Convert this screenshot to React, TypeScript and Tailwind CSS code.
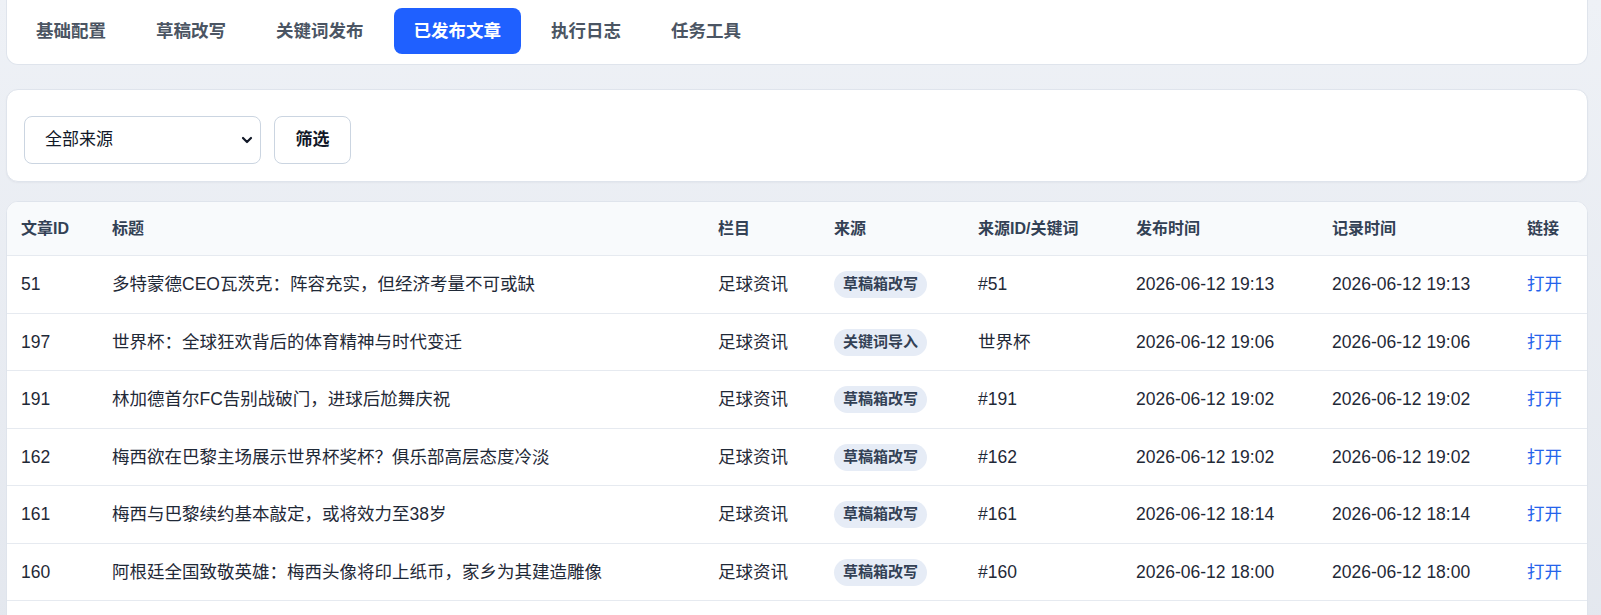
import React from "react";

const tabs = ["基础配置", "草稿改写", "关键词发布", "已发布文章", "执行日志", "任务工具"];

const rows = [
  { id: "51", title: "多特蒙德CEO瓦茨克：阵容充实，但经济考量不可或缺", source: "草稿箱改写", ref: "#51", pub: "2026-06-12 19:13", rec: "2026-06-12 19:13" },
  { id: "197", title: "世界杯：全球狂欢背后的体育精神与时代变迁", source: "关键词导入", ref: "世界杯", pub: "2026-06-12 19:06", rec: "2026-06-12 19:06" },
  { id: "191", title: "林加德首尔FC告别战破门，进球后尬舞庆祝", source: "草稿箱改写", ref: "#191", pub: "2026-06-12 19:02", rec: "2026-06-12 19:02" },
  { id: "162", title: "梅西欲在巴黎主场展示世界杯奖杯？俱乐部高层态度冷淡", source: "草稿箱改写", ref: "#162", pub: "2026-06-12 19:02", rec: "2026-06-12 19:02" },
  { id: "161", title: "梅西与巴黎续约基本敲定，或将效力至38岁", source: "草稿箱改写", ref: "#161", pub: "2026-06-12 18:14", rec: "2026-06-12 18:14" },
  { id: "160", title: "阿根廷全国致敬英雄：梅西头像将印上纸币，家乡为其建造雕像", source: "草稿箱改写", ref: "#160", pub: "2026-06-12 18:00", rec: "2026-06-12 18:00" },
];

const cols = "grid grid-cols-[91px_606px_116px_144px_158px_196px_195px_1fr]";

export default function App() {
  return (
    <div
      className="min-h-screen bg-gradient-to-b from-[#eef1f6] to-[#e3e7ee] pl-[6px] pr-[13px] text-[#1f2937]"
      style={{ fontFamily: '"Liberation Sans", "Noto Sans CJK SC", sans-serif' }}
    >
      {/* tabs */}
      <div className="bg-white border border-t-0 border-[#dfe4ec] rounded-b-xl pt-2 pb-[10px] px-[9px] flex gap-[10px]">
        {tabs.map((t) => (
          <button
            key={t}
            className={
              t === "已发布文章"
                ? "h-[46px] px-5 rounded-lg bg-[#1f60ff] text-white text-[17.5px] font-bold"
                : "h-[46px] px-5 rounded-lg text-[#4b5563] text-[17.5px] font-bold"
            }
          >
            {t}
          </button>
        ))}
      </div>

      {/* filter */}
      <div className="mt-6 bg-white border border-[#dfe4ec] rounded-xl pt-[26px] pb-[17px] px-[17px] flex gap-[13px] shadow-[0_1px_2px_rgba(15,23,42,0.04)]">
        <div className="relative">
          <select className="appearance-none w-[237px] h-[48px] border border-[#cbd5e1] rounded-lg pl-[20px] text-[17px] text-[#111827] bg-white">
            <option>全部来源</option>
          </select>
          <svg className="absolute right-[8px] top-[19px] pointer-events-none" width="12" height="10" viewBox="0 0 12 10">
            <path d="M2 3l4 4 4-4" fill="none" stroke="#111827" strokeWidth="2.2" strokeLinecap="round" strokeLinejoin="round" />
          </svg>
        </div>
        <button className="w-[77px] h-[48px] border border-[#cbd5e1] rounded-lg text-[17px] font-bold text-[#111827] bg-white">
          筛选
        </button>
      </div>

      {/* table */}
      <div className="mt-[19px] bg-white border border-[#dfe4ec] rounded-t-xl overflow-hidden">
        <div className={`${cols} h-[54px] items-center bg-[#f8fafc] border-b border-[#e6eaf0] text-[16px] font-bold text-[#334155]`}>
          {["文章ID", "标题", "栏目", "来源", "来源ID/关键词", "发布时间", "记录时间", "链接"].map((h) => (
            <div key={h} className="pl-[14px]">{h}</div>
          ))}
        </div>
        {rows.map((r) => (
          <div key={r.id} className={`${cols} h-[57.5px] items-center border-b border-[#e6eaf0] text-[17.5px] text-[#1f2937]`}>
            <div className="pl-[14px]">{r.id}</div>
            <div className="pl-[14px] whitespace-nowrap">{r.title}</div>
            <div className="pl-[14px]">足球资讯</div>
            <div className="pl-[14px]">
              <span className="inline-flex items-center h-[27px] px-[9px] rounded-full bg-[#e6ecf6] text-[15px] font-bold text-[#334155]">
                {r.source}
              </span>
            </div>
            <div className="pl-[14px]">{r.ref}</div>
            <div className="pl-[14px]">{r.pub}</div>
            <div className="pl-[14px]">{r.rec}</div>
            <div className="pl-[14px] text-[#2563eb]">打开</div>
          </div>
        ))}
        <div className="h-[60px]" />
      </div>
    </div>
  );
}
